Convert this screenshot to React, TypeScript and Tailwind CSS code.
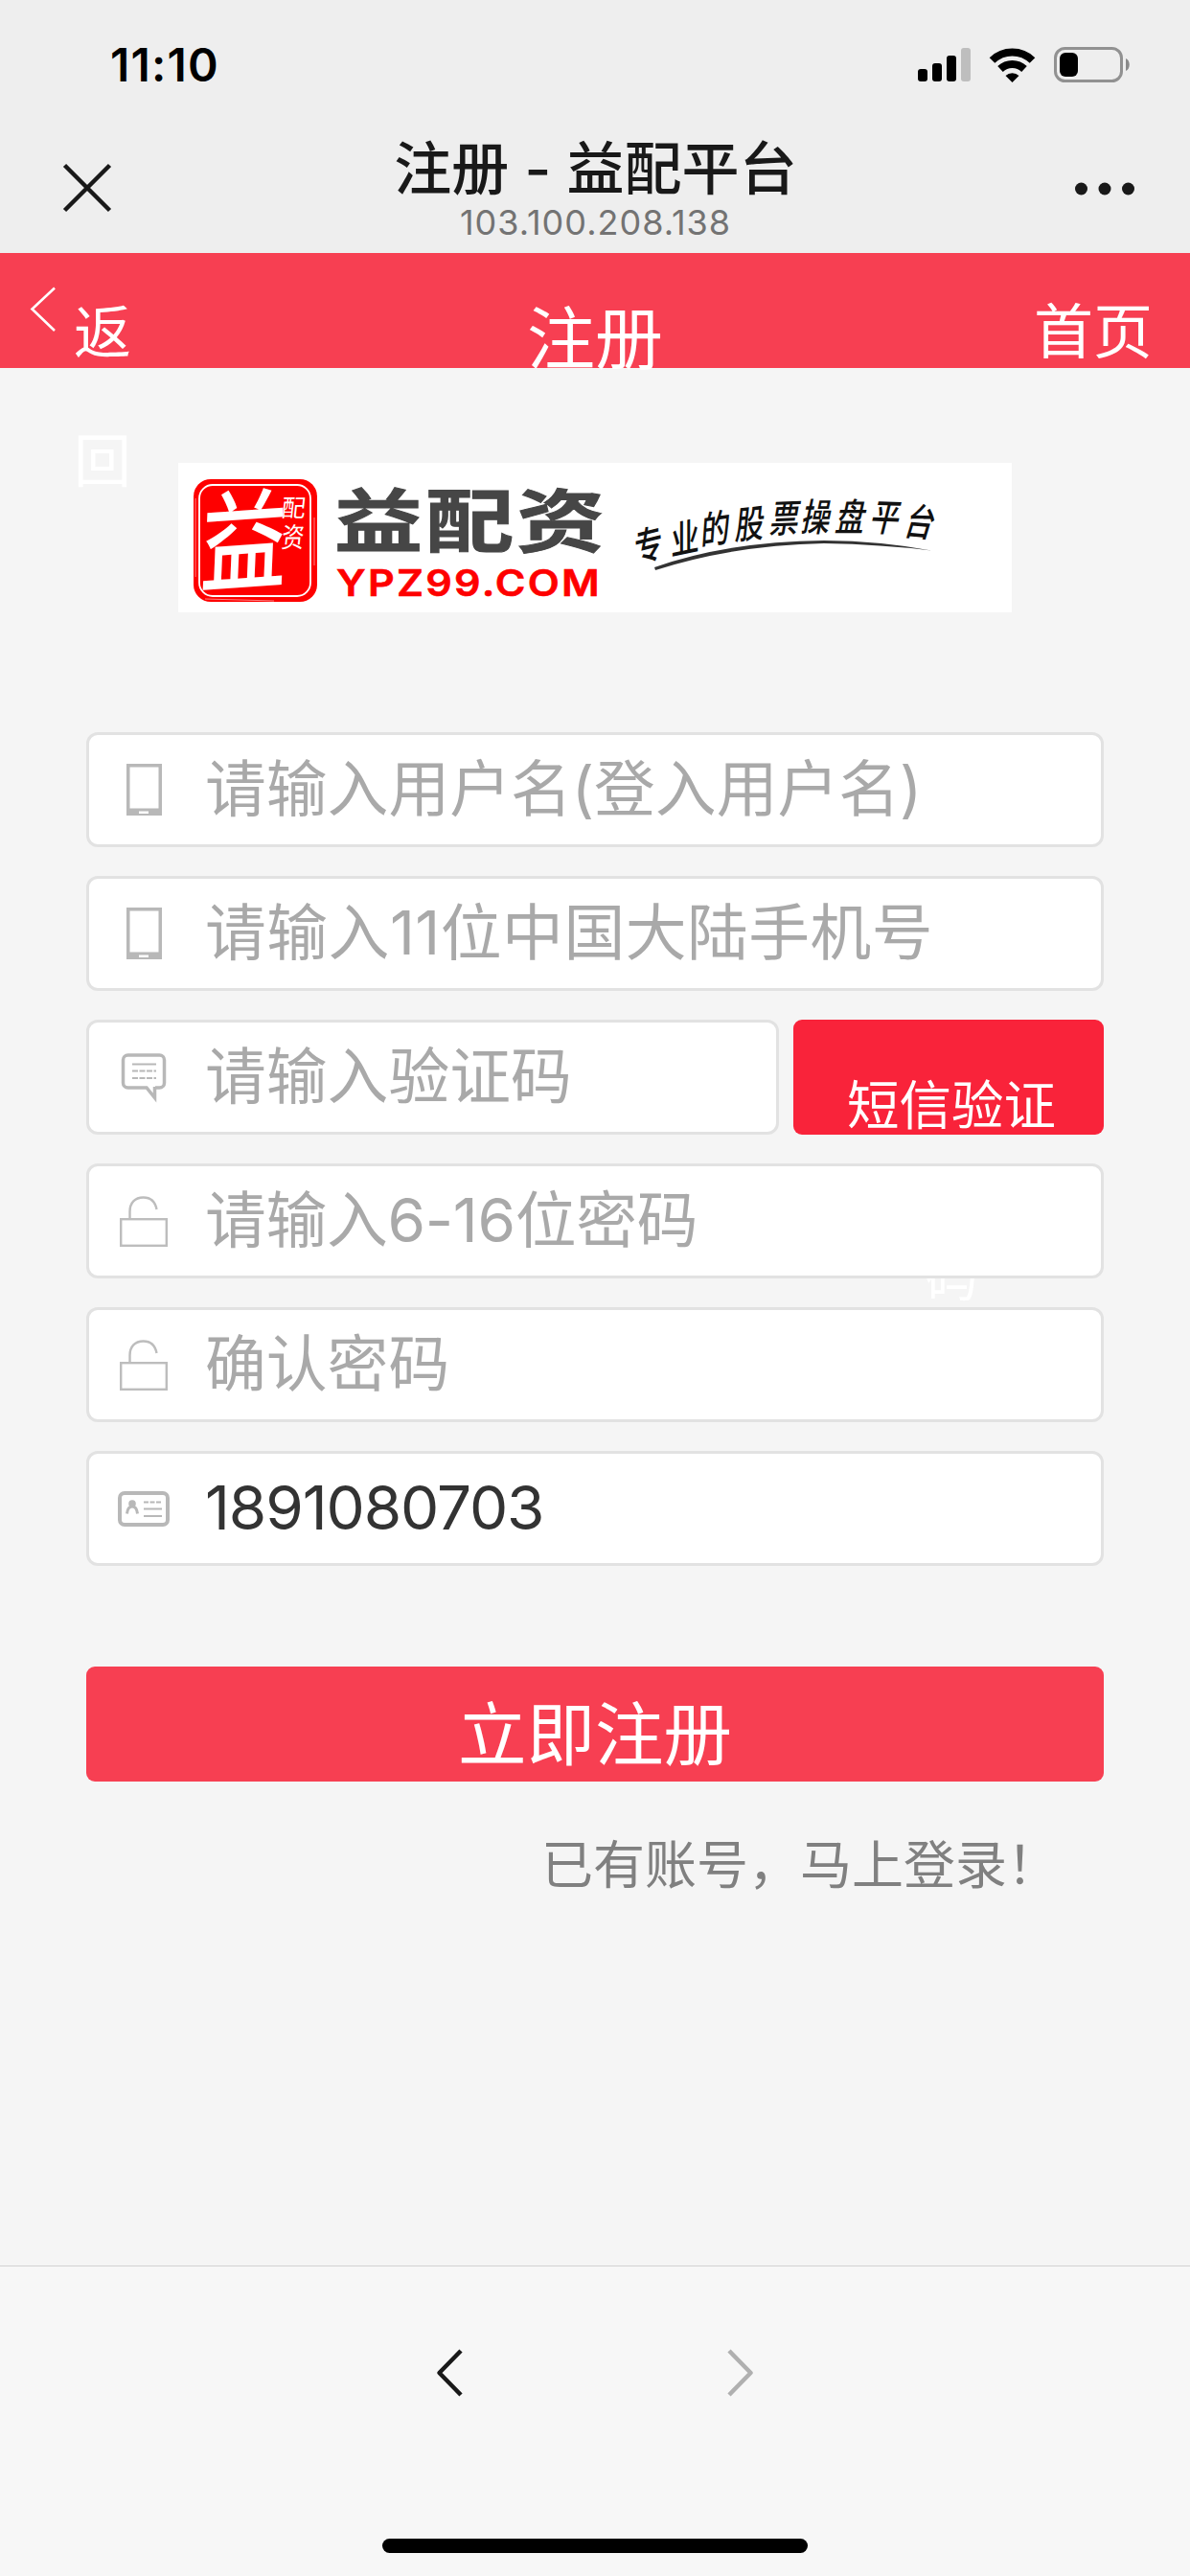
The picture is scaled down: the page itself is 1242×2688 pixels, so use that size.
import type { ReactNode } from "react";

const SLOGAN = [
  { char: "专", x: 677, y: 569, rotate: -14 },
  { char: "业", x: 715, y: 562, rotate: -12 },
  { char: "的", x: 747, y: 552, rotate: -8 },
  { char: "股", x: 783, y: 547, rotate: -6 },
  { char: "票", x: 820, y: 541, rotate: -2 },
  { char: "操", x: 853, y: 540, rotate: 0 },
  { char: "盘", x: 889, y: 540, rotate: 0 },
  { char: "平", x: 925, y: 540, rotate: 2 },
  { char: "台", x: 961, y: 545, rotate: 5 },
];

function StatusBar() {
  return (
    <div className="h-[134px] flex items-center justify-between pl-[115px] pr-[63px] pt-0.5">
      <div className="text-[48px] font-semibold text-black leading-none tracking-[1.2px]">
        11:10
      </div>
      <svg width="222" height="38" viewBox="956 49 222 38">
        <rect x="957" y="72" width="10" height="13" rx="3" />
        <rect x="972" y="66" width="10" height="19" rx="3" />
        <rect x="987" y="58" width="10" height="27" rx="3" />
        <rect x="1002" y="50" width="10" height="35" rx="3" fill="#bebebe" />
        <g fill="none" stroke="#000" strokeWidth="8">
          <path d="M1034.500 63a30 30 0 0 1 42 0" />
          <path d="M1043 72a18 18 0 0 1 25 0" />
        </g>
        <path d="M1048.500 79a10 10 0 0 1 14 0l-7 7z" />
        <rect
          x="1100.500"
          y="50.500"
          width="69"
          height="34"
          rx="10"
          fill="none"
          stroke="#919191"
          strokeWidth="3"
        />
        <rect x="1105" y="55" width="19" height="25" rx="6" />
        <path d="M1174 61c5 2 5 11 0 13z" fill="#8a8a8a" />
      </svg>
    </div>
  );
}

function TitleBar() {
  return (
    <div className="h-[130px] flex items-start justify-between pl-[65px] pr-[57px] text-[#191919]">
      <svg
        width="52"
        height="52"
        viewBox="0 0 52 52"
        className="mt-9"
        fill="none"
        stroke="currentColor"
        strokeWidth="4.500"
      >
        <path d="M2.500 2.500l47 47M49.500 2.500l-47 47" />
      </svg>
      <div className="flex flex-col items-center pl-[5px]">
        <div className="h-[82px] mt-[1px] text-[60px] leading-[82px] font-medium tracking-[0.1px] whitespace-pre">
          注册 - 益配平台
        </div>
        <div className="text-[36px] leading-[30px] tracking-[1px] text-[#737373]">
          103.100.208.138
        </div>
      </div>
      <svg width="64" height="14" viewBox="0 0 64 14" className="mt-14" fill="currentColor">
        <circle cx="7.500" cy="7" r="6.500" />
        <circle cx="32" cy="7" r="6.500" />
        <circle cx="56.500" cy="7" r="6.500" />
      </svg>
    </div>
  );
}

function PageHeader() {
  return (
    <div className="h-[120px] flex items-start justify-between bg-[#f73f52] text-white pl-[31px] pr-[39px]">
      <div className="w-[240px] flex">
        <svg
          width="28"
          height="48"
          viewBox="0 0 28 48"
          className="mt-[35px] shrink-0"
          fill="none"
          stroke="#fff"
          strokeWidth="2.600"
        >
          <path d="M26 1.500L2.500 23.500 26 46" />
        </svg>
        {/* too narrow for both characters, the second one wraps below the bar */}
        <div className="w-[60px] ml-[18px] mt-[16px] text-[60px] leading-[134px] break-all">
          返回
        </div>
      </div>
      <div className="w-[150px] pl-[8px] text-[71px] leading-[178px] whitespace-nowrap">
        注册
      </div>
      <div className="w-[240px] mt-[16px] text-[62px] leading-[134px] text-right">
        首页
      </div>
    </div>
  );
}

function Logo() {
  return (
    <svg width="870" height="156" viewBox="186 483 870 156" className="ml-[186px] relative">
      <rect x="186" y="483" width="870" height="156" fill="#fff" />
      <rect x="202" y="500" width="129" height="128" rx="18" fill="#fe0000" />
      <rect
        x="208"
        y="506"
        width="116"
        height="116"
        rx="14"
        fill="none"
        stroke="#fff"
        strokeWidth="1.800"
      />
      <path d="M204 520v82M214 625l72 2M328 540v50" stroke="#fff" strokeOpacity=".5" fill="none" />
      <text
        transform="translate(208 610) rotate(-4) scale(.92 1.16) skewX(-8)"
        fontSize="98"
        fontWeight="500"
        fill="#fff"
      >
        益
      </text>
      <text transform="translate(293 539) skewX(-6)" fontSize="25" fill="#fff">
        配
      </text>
      <text transform="translate(293 571) skewX(-6) scale(.9 1.1)" fontSize="26" fill="#fff">
        资
      </text>
      <text
        transform="translate(349 570) scale(1.28 1)"
        fontSize="72"
        fontWeight="700"
        letterSpacing="2.200"
        fill="#464646"
        stroke="#464646"
        strokeWidth="1"
      >
        益配资
      </text>
      <text
        x="351"
        y="622"
        fontSize="38"
        fontWeight="600"
        fill="#fe0000"
        stroke="#fe0000"
        strokeWidth=".6"
        letterSpacing="2"
        textLength="277"
        lengthAdjust="spacingAndGlyphs"
      >
        YPZ99.COM
      </text>
      {SLOGAN.map((s) => (
        <text
          key={s.char}
          transform={`translate(${s.x} ${s.y}) rotate(${s.rotate}) skewX(-12) scale(.84 1.1)`}
          y="13"
          fontSize="36"
          fontWeight="500"
          textAnchor="middle"
          fill="#111"
        >
          {s.char}
        </text>
      ))}
      <path
        d="M683 592Q760 565 860 564Q920 564.500 972 574.500Q920 568 860 567Q765 569 684 595z"
        fill="#333"
      />
    </svg>
  );
}

function PhoneIcon() {
  return (
    <svg width="54" height="54" viewBox="0 0 54 54">
      <path
        d="M9 0h37v54H9zM12.500 3.500v43h30v-43zM22 49.500v2.500h10v-2.500z"
        fill="#b8b8b8"
        fillRule="evenodd"
      />
    </svg>
  );
}

function MessageIcon() {
  return (
    <svg width="54" height="54" viewBox="0 0 54 54" fill="none" stroke="#b8b8b8">
      <path
        d="M39 38h4.500a5 5 0 0 0 5-5V9a5 5 0 0 0-5-5h-33a5 5 0 0 0-5 5v24a5 5 0 0 0 5 5H30l8.500 10.500V37"
        strokeWidth="3.500"
      />
      <path d="M15 13.500h25" strokeWidth="2" />
      <path d="M15 20.500h25M15 28h25" strokeWidth="2" strokeDasharray="6 1.500" />
    </svg>
  );
}

function LockIcon() {
  return (
    <svg
      width="54"
      height="54"
      viewBox="0 0 54 54"
      fill="none"
      stroke="#bdbdbd"
      strokeWidth="2.400"
    >
      <rect x="3.200" y="25.200" width="47.600" height="27.600" />
      <path d="M12.500 25V17.500C12.500 8 18 2.500 26.500 2.500C34 2.500 39 7 40.500 15" />
    </svg>
  );
}

function CardIcon() {
  return (
    <svg width="54" height="54" viewBox="0 0 54 54" fill="none" stroke="#b8b8b8">
      <rect x="2" y="11" width="50" height="33" rx="5" strokeWidth="4" />
      <circle cx="15" cy="22" r="3.800" fill="#b8b8b8" stroke="none" />
      <path d="M9.500 32.500c.5-5 2.500-7.500 5.500-7.500s5 2.500 5.500 7.500" strokeWidth="3" />
      <path d="M27 20.500h19" strokeWidth="2" strokeDasharray="5 1.500" />
      <path d="M27 27.500h19M27 35h19" strokeWidth="2" />
    </svg>
  );
}

function Field({
  icon,
  placeholder,
  value,
  styles = "",
}: {
  icon: ReactNode;
  placeholder?: string;
  value?: string;
  styles?: string;
}) {
  return (
    <div
      className={`relative h-[120px] flex items-center bg-white border-3 border-[#e2e2e2] rounded-xl pl-[30px] ${styles}`}
    >
      {icon}
      <input
        className="ml-[37px] flex-1 min-w-0 h-full pb-1 text-[63.800px] [letter-spacing:inherit] text-[#333] placeholder:text-[#a9a9a9] outline-none"
        placeholder={placeholder}
        defaultValue={value}
      />
    </div>
  );
}

function RegisterForm() {
  return (
    <div className="mt-[125px] px-[90px] flex flex-col gap-[30px]">
      <Field icon={<PhoneIcon />} placeholder="请输入用户名(登入用户名)" />
      <Field
        icon={<PhoneIcon />}
        placeholder="请输入11位中国大陆手机号"
        styles="tracking-[0.5px]"
      />
      <div className="flex gap-[15px]">
        <Field icon={<MessageIcon />} placeholder="请输入验证码" styles="w-[723px]" />
        <div className="w-[324px] h-[120px] pl-[54px] pr-[48px] bg-[#f9233a] rounded-[9px] text-[54.500px] leading-[179px] text-white text-center break-all">
          短信验证码
        </div>
      </div>
      <Field
        icon={<LockIcon />}
        placeholder="请输入6-16位密码"
        styles="tracking-[-0.3px]"
      />
      <Field icon={<LockIcon />} placeholder="确认密码" />
      <Field icon={<CardIcon />} value="1891080703" styles="tracking-[-1.1px]" />
      <button className="mt-[75px] h-[120px] bg-[#f73f52] rounded-[9px] text-[71.500px] leading-[142px] text-white">
        立即注册
      </button>
      <a className="mt-[18px] pr-[47px] text-right text-[54px] leading-[80px] text-[#808080]">
        已有账号，马上登录！
      </a>
    </div>
  );
}

function BottomBar() {
  return (
    <div className="h-[324px] border-t border-[#d2d2d2] bg-[#f7f7f7] flex flex-col items-center justify-between pb-[24px]">
      <div className="mt-[85px] flex gap-[276px]">
        <svg
          width="28"
          height="52"
          viewBox="0 0 28 52"
          fill="none"
          stroke="#191919"
          strokeWidth="4.500"
        >
          <path d="M26 3L3.500 26 26 49" strokeLinejoin="round" />
        </svg>
        <svg
          width="28"
          height="52"
          viewBox="0 0 28 52"
          fill="none"
          stroke="#b0b0b0"
          strokeWidth="4.500"
        >
          <path d="M2 3l22.500 23L2 49" strokeLinejoin="round" />
        </svg>
      </div>
      <div className="w-[444px] h-[15px] rounded-full bg-black" />
    </div>
  );
}

export default function App() {
  return (
    <div className="w-[1242px] h-[2688px] flex flex-col overflow-hidden bg-[#f5f5f5] font-[Inter,'Noto_Sans_CJK_SC',sans-serif]">
      <div className="bg-[#eeeeee]">
        <StatusBar />
        <TitleBar />
      </div>
      <PageHeader />
      <div className="flex-1 pt-[99px]">
        <Logo />
        <RegisterForm />
      </div>
      <BottomBar />
    </div>
  );
}
